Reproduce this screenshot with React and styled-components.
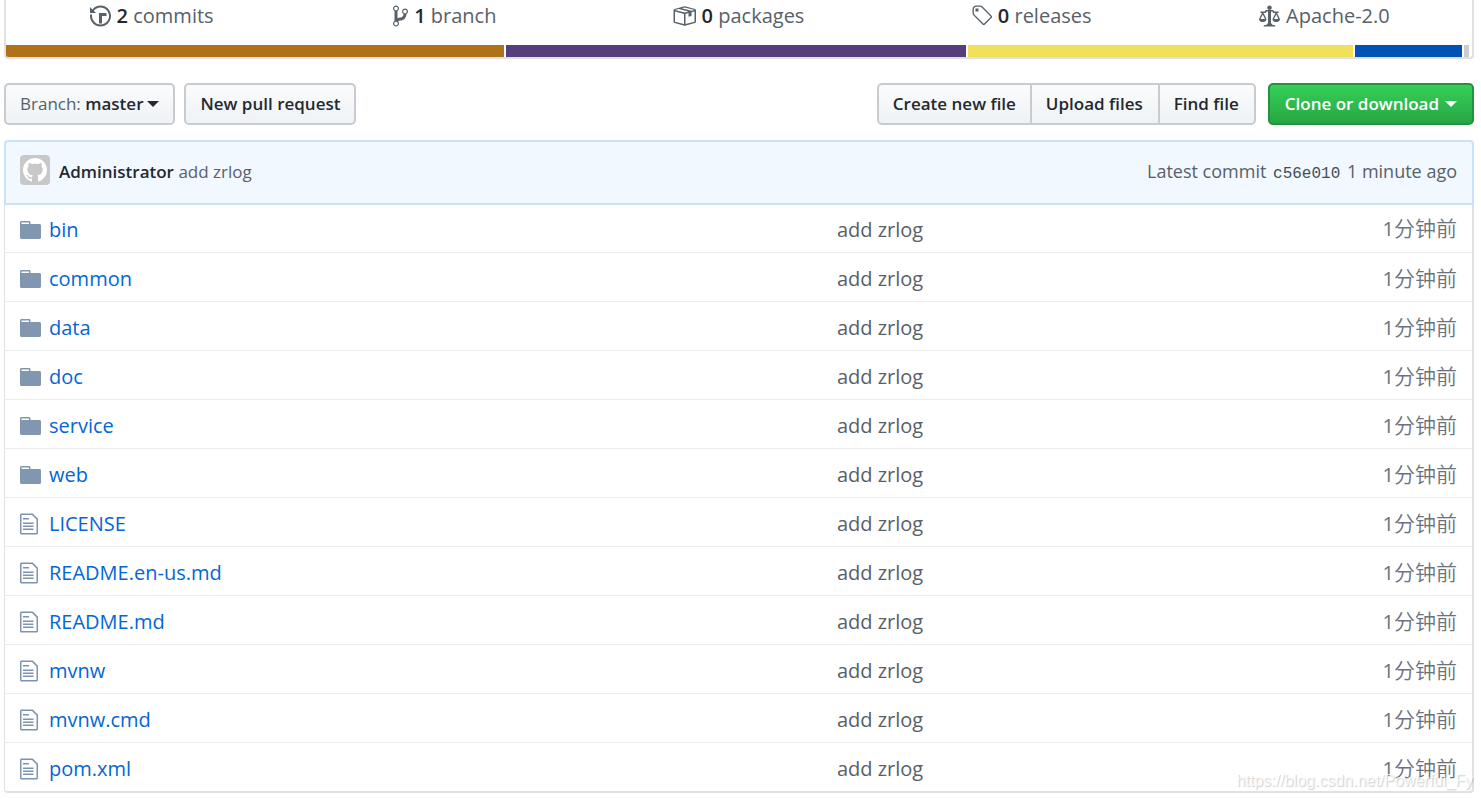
import React from "react";
import styled, { createGlobalStyle, css } from "styled-components";

const sans = `"Open Sans", "Noto Sans", "Noto Sans CJK SC", sans-serif`;

const GlobalStyle = createGlobalStyle`
  *, *::before, *::after { box-sizing: border-box; }
  body {
    margin: 0;
    background: #fff;
    color: #24292e;
    font-family: ${sans};
    font-size: 20px;
    line-height: 24px;
  }
  a { color: inherit; text-decoration: none; }
  a:hover { text-decoration: underline; }
`;

const Page = styled.main`
  position: relative;
  padding: 0 7px 6px 4px;
`;

const Summary = styled.section`
  border: 2px solid #dfe2e5;
  border-top: 0;
  border-radius: 0 0 4px 4px;
  overflow: hidden;
`;

const StatList = styled.ul`
  display: grid;
  grid-template-columns: repeat(5, 1fr);
  margin: 0;
  padding: 4px 0 17px;
  list-style: none;
`;

const Stat = styled.li`
  display: flex;
  justify-content: center;
  padding-right: 2px;
  color: #586069;
`;

const StatLink = styled.a`
  display: flex;
  align-items: center;
  gap: 6px;
`;

const Count = styled.strong`
  color: #24292e;
  font-weight: 600;
`;

const LanguageBar = styled.div`
  display: flex;
  gap: 2px;
  height: 12px;
  padding-right: 3px;
`;

const Language = styled.span`
  flex: ${(p) => p.$share} 1 0;
  background: ${(p) => p.$color};
`;

const Toolbar = styled.nav`
  display: flex;
  align-items: center;
  gap: 9px;
  padding: 24px 0 15px;
`;

const ToolbarEnd = styled.div`
  display: flex;
  gap: 12px;
  margin-left: auto;
`;

const Button = styled.button`
  display: inline-flex;
  align-items: center;
  gap: 4px;
  height: 42px;
  padding: 0 14px;
  border: 2px solid #c8cbcf;
  border-radius: 5px;
  background: linear-gradient(#fafbfc, #eff3f6);
  color: #24292e;
  font: 600 17px/24px ${sans};
  white-space: nowrap;
  cursor: pointer;
  ${(p) =>
    p.$primary &&
    css`
      gap: 6px;
      padding: 0 15px;
      border-color: #269140;
      background: linear-gradient(#34d058, #28a745);
      color: #fff;
    `}
`;

const ButtonGroup = styled.div`
  display: flex;
  ${Button} { border-radius: 0; }
  ${Button} + ${Button} {
    padding-right: 15px;
    border-left: 0;
  }
  ${Button}:first-child { border-radius: 5px 0 0 5px; }
  ${Button}:last-child { border-radius: 0 5px 5px 0; }
`;

const Muted = styled.span`
  color: #586069;
  font-weight: 400;
`;

const Caret = styled.span`
  border: 6px solid transparent;
  border-top-color: currentColor;
  border-bottom: 0;
`;

const CommitBar = styled.header`
  display: flex;
  align-items: center;
  gap: 9px;
  height: 65px;
  padding: 0 15px 2px 14px;
  border: 2px solid #c8e1ff;
  border-radius: 4px 4px 0 0;
  background: #f1f8ff;
  color: #586069;
  font-size: 17px;
`;

const Avatar = styled.span`
  display: flex;
  align-items: center;
  justify-content: center;
  width: 30px;
  height: 30px;
  margin-bottom: 4px;
  border-radius: 4px;
  background: #c8c8c8;
  color: #fff;
`;

const Author = styled.a`
  color: #24292e;
  font-weight: 600;
`;

const Latest = styled.span`
  margin-left: auto;
  padding-top: 2px;
  font-size: 18px;
`;

const Sha = styled.a`
  margin: 0 2px;
  color: #444d56;
  font-family: "Liberation Mono", monospace;
  font-size: 16px;
`;

const Files = styled.table`
  width: 100%;
  border: 1px solid #dfe2e5;
  border-width: 0 2px 2px 1px;
  border-radius: 0 0 4px 4px;
  border-spacing: 0;
  table-layout: fixed;
`;

const Cell = styled.td`
  width: ${(p) => p.$width};
  height: 49px;
  padding: 4px 15px 0 0;
  border-top: 1px solid #eaecef;
  color: #586069;
  text-align: ${(p) => p.$align || "left"};
  tr:first-child > & {
    height: 47px;
    padding-top: 2px;
    border-top: 0;
  }
`;

const FileLink = styled.a`
  display: flex;
  align-items: center;
  padding-left: 15px;
  color: #0366d6;
`;

const IconSlot = styled.span`
  display: flex;
  width: 29px;
  color: ${(p) => (p.$folder ? "#8197b0" : "#7d94ae")};
`;

const Age = styled.time`
  display: block;
  padding-bottom: 2px;
  color: #6a737d;
  font-weight: 350;
  font-size: 21px;
`;

const AgeNumber = styled.span`
  font-weight: 400;
  font-size: 20px;
`;

const Watermark = styled.span`
  position: absolute;
  right: 8px;
  bottom: 6px;
  color: rgba(255, 255, 255, 0.75);
  font: 16px/24px "Liberation Sans", Arial, sans-serif;
  text-shadow: 1px 1px 1px rgba(0, 0, 0, 0.2);
  pointer-events: none;
`;

const shapes = {
  history: [14, "M8 13H6V6h5v2H8v5zM7 1C4.81 1 2.87 2.02 1.59 3.59L0 2v4h4L2.5 4.5C3.55 3.17 5.17 2.3 7 2.3c3.14 0 5.7 2.56 5.7 5.7s-2.56 5.7-5.7 5.7A5.71 5.71 0 0 1 1.3 8c0-.34.03-.67.09-1H.08C.03 7.33 0 7.66 0 8c0 3.86 3.14 7 7 7s7-3.14 7-7-3.14-7-7-7z"],
  branch: [10, "M10 5c0-1.11-.89-2-2-2a1.993 1.993 0 0 0-1 3.72v.3c-.02.52-.23.98-.63 1.38-.4.4-.86.61-1.38.63-.83.02-1.48.16-2 .45V4.72a1.993 1.993 0 0 0-1-3.72C.88 1 0 1.89 0 3a2 2 0 0 0 1 1.72v6.56c-.59.35-1 .99-1 1.72 0 1.11.89 2 2 2 1.11 0 2-.89 2-2 0-.53-.2-1-.53-1.36.09-.06.48-.41.59-.47.25-.11.56-.17.94-.17 1.05-.05 1.95-.45 2.75-1.25S8.95 7.77 9 6.73h-.02C9.59 6.37 10 5.73 10 5zM2 1.8c.66 0 1.2.55 1.2 1.2 0 .65-.55 1.2-1.2 1.2C1.35 4.2.8 3.65.8 3c0-.65.55-1.2 1.2-1.2zm0 12.41c-.66 0-1.2-.55-1.2-1.2 0-.65.55-1.2 1.2-1.2.65 0 1.2.55 1.2 1.2 0 .65-.55 1.2-1.2 1.2zm6-8c-.66 0-1.2-.55-1.2-1.2 0-.65.55-1.2 1.2-1.2.65 0 1.2.55 1.2 1.2 0 .65-.55 1.2-1.2 1.2z"],
  package: [16, "M1 4.27v7.47c0 .45.3.84.75.97l6.5 1.73c.16.05.34.05.5 0l6.5-1.73c.45-.13.75-.52.75-.97V4.27c0-.45-.3-.84-.75-.97l-6.5-1.74a1.4 1.4 0 0 0-.5 0L1.75 3.3c-.45.13-.75.52-.75.97zm7 9.09l-6-1.59V5l6 1.61v6.75zM2 4l2.5-.67L11 5.06l-2.5.67L2 4zm13 7.77l-6 1.59V6.61l2-.55V8.5l2-.53V5.53L15 5v6.77zm-2-7.24L6.5 2.8l2-.53L15 4l-2 .53z"],
  tag: [14, "M7.73 1.73C7.26 1.26 6.62 1 5.96 1H3.5C2.13 1 1 2.13 1 3.5v2.47c0 .66.27 1.3.73 1.77l6.06 6.06c.39.39 1.02.39 1.41 0l4.59-4.59a.996.996 0 0 0 0-1.41L7.73 1.73zM2.38 7.09c-.31-.3-.47-.7-.47-1.13V3.5c0-.88.72-1.59 1.59-1.59h2.47c.42 0 .83.16 1.13.47l6.14 6.13-4.73 4.73-6.13-6.15zM3.01 3h2v2H3V3h.01z"],
  law: [14, "M7 4c-.83 0-1.5-.67-1.5-1.5S6.17 1 7 1s1.5.67 1.5 1.5S7.83 4 7 4zm7 6c0 1.11-.89 2-2 2h-1c-1.11 0-2-.89-2-2l2-4h-1c-.55 0-1-.45-1-1H8v8c.42 0 1 .45 1 1h1c.42 0 1 .45 1 1H3c0-.55.58-1 1-1h1c0-.55.58-1 1-1h.03L6 5H5c0 .55-.45 1-1 1H3l2 4c0 1.11-.89 2-2 2H2c-1.11 0-2-.89-2-2l2-4H1V5h3c0-.55.45-1 1-1h4c.55 0 1 .45 1 1h3v1h-1l2 4zM2.5 7L1 10h3L2.5 7zM13 10l-1.5-3-1.5 3h3z"],
  folder: [14, "M13 4H7V3c0-.66-.31-1-1-1H1c-.55 0-1 .45-1 1v10c0 .55.45 1 1 1h12c.55 0 1-.45 1-1V5c0-.55-.45-1-1-1zM6 4H1V3h5v1z"],
  file: [12, "M6 5H2V4h4v1zM2 8h7V7H2v1zm0 2h7V9H2v1zm0 2h7v-1H2v1zm10-7.5V14c0 .55-.45 1-1 1H1c-.55 0-1-.45-1-1V2c0-.55.45-1 1-1h7.5L12 4.5zM11 5L8 2H1v12h10V5z"],
  github: [16, "M8 0C3.58 0 0 3.58 0 8c0 3.54 2.29 6.53 5.47 7.59.4.07.55-.17.55-.38 0-.19-.01-.82-.01-1.49-2.01.37-2.53-.49-2.69-.94-.09-.23-.48-.94-.82-1.13-.28-.15-.68-.52-.01-.53.63-.01 1.08.58 1.23.82.72 1.21 1.87.87 2.33.66.07-.52.28-.87.51-1.07-1.78-.2-3.64-.89-3.64-3.95 0-.87.31-1.59.82-2.15-.08-.2-.36-1.02.08-2.12 0 0 .67-.21 2.2.82.64-.18 1.32-.27 2-.27.68 0 1.36.09 2 .27 1.53-1.04 2.2-.82 2.2-.82.44 1.1.16 1.92.08 2.12.51.56.82 1.27.82 2.15 0 3.07-1.87 3.75-3.65 3.95.29.25.54.73.54 1.48 0 1.07-.01 1.93-.01 2.2 0 .21.15.46.55.38A8.013 8.013 0 0 0 16 8c0-4.42-3.58-8-8-8z"],
};

function Icon({ name }) {
  const [width, d] = shapes[name];
  return (
    <svg width={width * 1.5} height="24" viewBox={`0 0 ${width} 16`} fill="currentColor" aria-hidden="true">
      <path fillRule="evenodd" d={d} />
    </svg>
  );
}

const stats = [
  { icon: "history", count: "2", label: "commits" },
  { icon: "branch", count: "1", label: "branch" },
  { icon: "package", count: "0", label: "packages" },
  { icon: "tag", count: "0", label: "releases" },
  { icon: "law", label: "Apache-2.0" },
];

const languages = [
  { share: 498, color: "#b07219" },
  { share: 460, color: "#563d7c" },
  { share: 385, color: "#f1e05a" },
  { share: 107, color: "#0052b4" },
  { share: 5, color: "#ccc" },
];

const folders = ["bin", "common", "data", "doc", "service", "web"];
const documents = ["LICENSE", "README.en-us.md", "README.md", "mvnw", "mvnw.cmd", "pom.xml"];
const entries = [
  ...folders.map((name) => ({ name, folder: true })),
  ...documents.map((name) => ({ name, folder: false })),
];

export default function App() {
  return (
    <Page>
      <GlobalStyle />
      <Summary>
        <StatList>
          {stats.map((s) => (
            <Stat key={s.label}>
              <StatLink href="#">
                <Icon name={s.icon} />
                <span>
                  {s.count && <Count>{s.count}</Count>} {s.label}
                </span>
              </StatLink>
            </Stat>
          ))}
        </StatList>
        <LanguageBar>
          {languages.map((l) => (
            <Language key={l.color} $share={l.share} $color={l.color} />
          ))}
        </LanguageBar>
      </Summary>

      <Toolbar>
        <Button type="button">
          <span>
            <Muted>Branch:</Muted> master
          </span>
          <Caret />
        </Button>
        <Button type="button">New pull request</Button>
        <ToolbarEnd>
          <ButtonGroup>
            <Button type="button">Create new file</Button>
            <Button type="button">Upload files</Button>
            <Button type="button">Find file</Button>
          </ButtonGroup>
          <Button type="button" $primary>
            Clone or download
            <Caret />
          </Button>
        </ToolbarEnd>
      </Toolbar>

      <section>
        <CommitBar>
          <Avatar>
            <Icon name="github" />
          </Avatar>
          <span>
            <Author href="#">Administrator</Author> <a href="#">add zrlog</a>
          </span>
          <Latest>
            Latest commit <Sha href="#">c56e010</Sha> 1 minute ago
          </Latest>
        </CommitBar>
        <Files>
          <tbody>
            {entries.map((e) => (
              <tr key={e.name}>
                <Cell>
                  <FileLink href="#">
                    <IconSlot $folder={e.folder}>
                      <Icon name={e.folder ? "folder" : "file"} />
                    </IconSlot>
                    {e.name}
                  </FileLink>
                </Cell>
                <Cell $width="30%">
                  <a href="#">add zrlog</a>
                </Cell>
                <Cell $width="195px" $align="right">
                  <Age>
                    <AgeNumber>1</AgeNumber>分钟前
                  </Age>
                </Cell>
              </tr>
            ))}
          </tbody>
        </Files>
      </section>
      <Watermark>https://blog.csdn.net/Powerful_Fy</Watermark>
    </Page>
  );
}
